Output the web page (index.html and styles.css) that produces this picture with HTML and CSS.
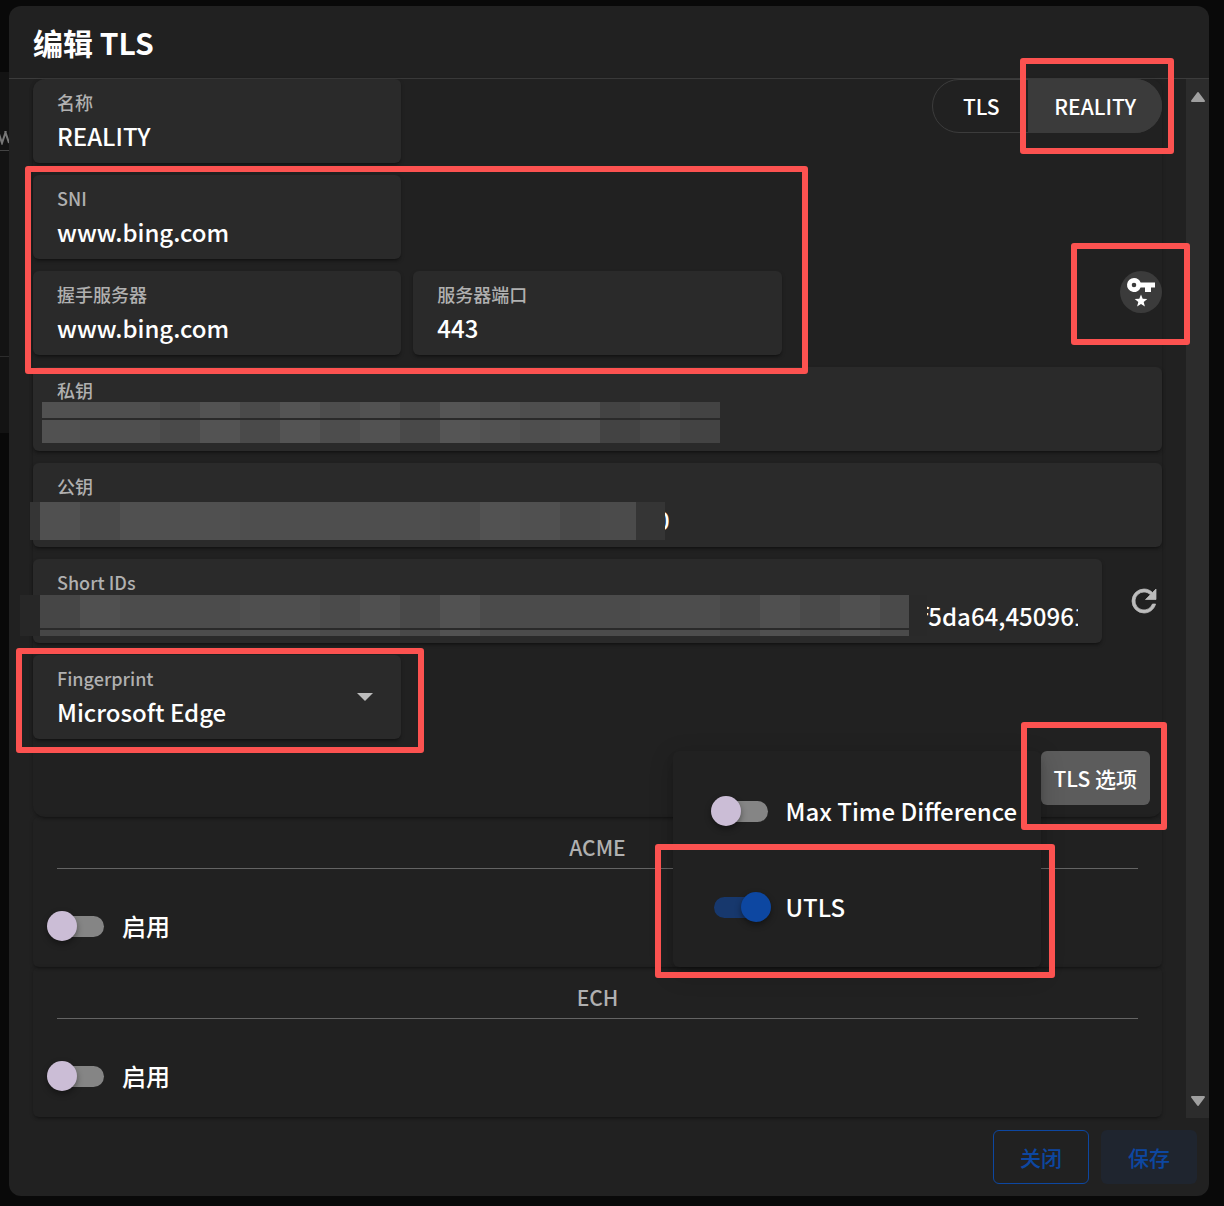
FILE: index.html
```html
<!DOCTYPE html>
<html lang="zh-CN">
<head>
<meta charset="utf-8">
<meta name="viewport" content="width=device-width, initial-scale=1">
<title>编辑 TLS</title>
<link rel="stylesheet" href="styles.css">
</head>
<body>
<div class="backdrop" aria-hidden="true">
  <div class="backdrop-field">
    <svg viewBox="0 0 9 14" width="9" height="14" fill="none" stroke="#777" stroke-width="2"><path d="M-2 0L2 12 6 0M5 0l4 12"/></svg>
  </div>
</div>
<main class="dialog" role="dialog" aria-labelledby="dialog-title">
  <h1 class="dialog-title" id="dialog-title">编辑 TLS</h1>
  <div class="dialog-body">
    <div class="content">
      <section class="card card-main">
        <div class="form">
          <div class="field field-first">
            <label for="name">名称</label>
            <input id="name" type="text" value="REALITY">
          </div>
          <div class="toggle">
            <button type="button" class="toggle-item">TLS</button>
            <button type="button" class="toggle-item active" aria-pressed="true">REALITY<span class="mark mark-reality"></span></button>
          </div>
          <div class="field row-sni">
            <label for="sni">SNI</label>
            <input id="sni" type="text" value="www.bing.com">
          </div>
          <div class="field row-server">
            <label for="server">握手服务器</label>
            <input id="server" type="text" value="www.bing.com">
          </div>
          <div class="field row-port">
            <label for="port">服务器端口</label>
            <input id="port" type="text" inputmode="numeric" value="443">
          </div>
          <button type="button" class="key-button" aria-label="生成密钥">
            <svg viewBox="0 0 42 42" width="42" height="42" fill="currentColor"><path fill-rule="evenodd" d="M14 7a7 7 0 0 1 6.600 4.600H35v4.800h-4V21h-6v-4.600h-4.400A7 7 0 1 1 14 7zm0 4.700a2.300 2.300 0 1 0 0 4.600a2.300 2.300 0 0 0 0-4.600z"/><path d="M21 23.500l1.700 4.300 4.600.3-3.600 2.900 1.200 4.500-3.900-2.500-3.900 2.500 1.200-4.500-3.600-2.900 4.600-.3z"/></svg>
            <span class="mark mark-key"></span>
          </button>
          <span class="group-mark"></span>
          <div class="field wide">
            <label for="private-key">私钥</label>
            <input id="private-key" type="text">
            <span class="mosaic mosaic-private"></span>
          </div>
          <div class="field wide">
            <label for="public-key">公钥</label>
            <input id="public-key" type="text" value="0">
            <span class="mosaic mosaic-public"></span>
          </div>
          <div class="wide short-ids">
            <div class="field">
              <label for="short-ids">Short IDs</label>
              <input id="short-ids" type="text" value="f5da64,450961">
              <span class="mosaic mosaic-ids"></span>
            </div>
            <button type="button" class="refresh" aria-label="刷新">
              <svg viewBox="0 0 24 24" width="36" height="36" fill="currentColor" stroke="currentColor" stroke-width=".5"><path d="M17.650 6.350C16.200 4.900 14.210 4 12 4a8 8 0 0 0 0 16c3.730 0 6.840-2.550 7.730-6h-2.080A6 6 0 1 1 12 6c1.660 0 3.140.69 4.220 1.780L13 11h7V4z"/></svg>
            </button>
          </div>
          <div class="field">
            <label for="fingerprint">Fingerprint</label>
            <select id="fingerprint"><option>Microsoft Edge</option></select>
            <svg class="caret" viewBox="0 0 16 8" width="16" height="8" fill="currentColor"><path d="M0 0h16L8 8z"/></svg>
            <span class="mark mark-fingerprint"></span>
          </div>
        </div>
        <div class="card-actions">
          <div class="options">
            <button type="button" class="options-button" aria-expanded="true">TLS 选项</button>
            <div class="menu">
              <label class="switch menu-item"><input type="checkbox"><span>Max Time Difference</span></label>
              <label class="switch menu-item"><input type="checkbox" checked><span>UTLS</span><i class="mark mark-utls"></i></label>
            </div>
            <span class="mark mark-options"></span>
          </div>
        </div>
      </section>
      <section class="card">
        <h2 class="card-title">ACME</h2>
        <hr>
        <label class="switch card-switch"><input type="checkbox"><span>启用</span></label>
      </section>
      <section class="card">
        <h2 class="card-title">ECH</h2>
        <hr>
        <label class="switch card-switch"><input type="checkbox"><span>启用</span></label>
      </section>
    </div>
    <div class="scrollbar" aria-hidden="true">
      <svg viewBox="0 0 16 12" width="16" height="12"><path d="M8 2l6 8H2z"/></svg>
      <svg viewBox="0 0 16 12" width="16" height="12"><path d="M8 10l6-8H2z"/></svg>
    </div>
  </div>
  <footer class="dialog-actions">
    <button type="button" class="button outlined">关闭</button>
    <button type="button" class="button tonal">保存</button>
  </footer>
</main>
</body>
</html>
```
FILE: styles.css
```css
:root {
  --surface: #212121;
  --field: #2a2a2a;
  --primary: #0d47a1;
  --mark: #fc5250;
  --muted: #b0b0b0;
}

* {
  box-sizing: border-box;
}

body {
  display: flex;
  min-height: 100vh;
  margin: 0;
  padding: 6px 15px 10px 9px;
  background: #090909;
  color: #fff;
  font-family: "Noto Sans CJK SC", "Noto Sans", sans-serif;
  font-size: 24px;
  font-weight: 500;
  line-height: 36px;
}

button,
input,
select {
  margin: 0;
  padding: 0;
  border: 0;
  background: none;
  color: inherit;
  font: inherit;
}

button {
  cursor: pointer;
  font-size: 21px;
}

/* Page behind the dialog */
.backdrop {
  position: absolute;
  z-index: -1;
  top: 72px;
  left: 0;
  width: 50%;
  height: 361px;
  overflow: hidden;
  background: #131313;
}

.backdrop-field {
  height: 79px;
  padding-top: 59px;
  border-bottom: 1px solid #444;
  line-height: 0;
}

.backdrop::after {
  content: "";
  display: block;
  height: 205px;
  border-bottom: 1px solid #2c2c2c;
}

.dialog {
  display: flex;
  flex: 1;
  flex-direction: column;
  min-width: 0;
  border-radius: 12px;
  background: var(--surface);
}

.dialog-title {
  margin: 0;
  padding: 18px 24px;
  font-size: 30px;
  font-weight: 700;
}

.dialog-body {
  display: flex;
  flex: 1;
  border-top: 1px solid #3c3c3c;
}

.content {
  flex: 1;
  min-width: 0;
  padding: 0 24px;
}

.scrollbar {
  display: flex;
  flex-direction: column;
  align-items: center;
  justify-content: space-between;
  width: 23px;
  padding: 12px 0 11px;
  background: #2c2c2c;
}

.scrollbar path {
  fill: #9f9f9f;
  stroke: #9f9f9f;
  stroke-width: 2;
  stroke-linejoin: round;
}

.card {
  border-radius: 6px;
  box-shadow: 0 3px 3px -2px rgba(0, 0, 0, .35), 0 1px 4px rgba(0, 0, 0, .18);
}

.card-main {
  border-radius: 12px;
}

.form {
  display: grid;
  grid-template-columns: repeat(3, minmax(0, 1fr));
  gap: 12px;
}

.field {
  position: relative;
  display: flex;
  flex-direction: column;
  gap: 4px;
  height: 84px;
  padding: 11px 24px 9px;
  border-radius: 6px;
  background: var(--field);
  box-shadow: 0 3px 3px -2px rgba(0, 0, 0, .4), 0 2px 4px rgba(0, 0, 0, .2);
}

.field-first {
  border-top-left-radius: 12px;
}

.field label {
  color: var(--muted);
  font-size: 18px;
  line-height: 24px;
}

.field input,
.field select {
  width: 100%;
  height: 36px;
  outline: 0;
  appearance: none;
}

.row-sni {
  grid-row: 2;
  grid-column: 1;
}

.row-server {
  grid-row: 3;
  grid-column: 1;
}

.row-port {
  grid-row: 3;
  grid-column: 2;
}

.wide {
  grid-column: 1 / -1;
}

.short-ids {
  display: flex;
  align-items: center;
  gap: 24px;
}

.short-ids .field {
  flex: 1;
}

#public-key {
  padding-left: 599px;
}

#short-ids {
  padding-left: 863px;
}

.toggle {
  display: flex;
  grid-column: 3;
  justify-self: end;
  height: 54px;
  border: 1px solid #3c3c3c;
  border-radius: 27px;
}

.toggle-item {
  position: relative;
  min-width: 96px;
  padding: 0 26px;
}

.toggle-item.active {
  margin: -1px;
  border-radius: 0 27px 27px 0;
  background: #3b3b3b;
}

.key-button {
  position: relative;
  grid-row: 3;
  grid-column: 3;
  justify-self: end;
  width: 42px;
  height: 42px;
  border-radius: 50%;
  background: #3b3b3b;
}

.key-button svg,
.refresh svg {
  display: block;
}

.refresh {
  color: #bcbcbc;
}

.caret {
  position: absolute;
  top: 38px;
  right: 28px;
  color: #bcbcbc;
  pointer-events: none;
}

.card-actions {
  display: flex;
  justify-content: flex-end;
  padding: 12px;
}

.options {
  position: relative;
}

.options-button {
  height: 54px;
  padding: 0 13px;
  border-radius: 6px;
  background: #5c5c5c;
}

.menu {
  position: absolute;
  z-index: 2;
  top: 0;
  right: 100%;
  width: 368px;
  padding: 12px 0;
  border-radius: 6px;
  background: var(--surface);
  box-shadow: 0 5px 8px -3px rgba(0, 0, 0, .3), 0 6px 24px rgba(0, 0, 0, .2);
}

.switch {
  position: relative;
  display: flex;
  align-items: center;
  gap: 18px;
}

.menu-item {
  height: 96px;
  padding-left: 41px;
  white-space: nowrap;
}

.card-switch {
  height: 82px;
  padding-left: 17px;
}

.switch input {
  position: relative;
  width: 54px;
  height: 21px;
  border-radius: 11px;
  background: #858585;
  appearance: none;
}

.switch input::before {
  content: "";
  position: absolute;
  top: -5px;
  left: -3px;
  width: 30px;
  height: 30px;
  border-radius: 50%;
  background: #cbbdd6;
  box-shadow: 0 3px 6px rgba(0, 0, 0, .4);
}

.switch input:checked {
  background: #17386d;
}

.switch input:checked::before {
  left: 27px;
  background: var(--primary);
}

.card-title {
  margin: 0;
  padding-top: 12px;
  color: var(--muted);
  font-size: 21px;
  font-weight: 500;
  text-align: center;
}

hr {
  height: 1px;
  margin: 3px 24px 16px;
  border: 0;
  background: #646464;
}

.dialog-actions {
  display: flex;
  justify-content: flex-end;
  gap: 12px;
  padding: 12px;
}

.button {
  width: 96px;
  height: 54px;
  border-radius: 6px;
  color: var(--primary);
}

.outlined {
  border: 1px solid var(--primary);
}

.tonal {
  background: #1f252f;
}

/* Pixelated strips over secret values */
.mosaic {
  position: absolute;
}

.mosaic-private {
  top: 35px;
  left: 9px;
  width: 678px;
  height: 41px;
  background:
    linear-gradient(#2a2a2a, #2a2a2a) 0 16px / 100% 2px no-repeat,
    linear-gradient(90deg, #515151 38px, #4f4f4f 38px 118px, #4a4a4a 118px 158px, #535353 158px 198px, #4a4a4a 198px 238px, #545454 238px 278px, #4d4d4d 278px 318px, #525252 318px 358px, #494949 358px 398px, #555 398px 438px, #525252 438px 478px, #4e4e4e 478px 518px, #505050 518px 558px, #434343 558px 598px, #484848 598px 638px, #434343 638px);
}

.mosaic-public {
  top: 39px;
  left: -3px;
  width: 635px;
  height: 38px;
  background: linear-gradient(90deg, #353535 10px, #505050 10px 50px, #494949 50px 90px, #505050 90px 210px, #4e4e4e 210px 410px, #4c4c4c 410px 450px, #525252 450px 490px, #505050 490px 530px, #494949 530px 570px, #4b4b4b 570px 606px, #353535 606px);
}

.mosaic-ids {
  top: 36px;
  left: -13px;
  width: 907px;
  height: 41px;
  background:
    linear-gradient(#2a2a2a, #2a2a2a) 20px 33px / 869px 2px no-repeat,
    linear-gradient(90deg, #272727 20px, #464646 20px 60px, #505050 60px 100px, #4c4c4c 100px 220px, #4f4f4f 220px 300px, #4b4b4b 300px 340px, #505050 340px 380px, #494949 380px 420px, #525252 420px 460px, #4b4b4b 460px 620px, #4d4d4d 620px 700px, #484848 700px 740px, #505050 740px 780px, #4a4a4a 780px 820px, #505050 820px 860px, #4a4a4a 860px 889px, #292929 889px);
}

/* Red callout frames */
.mark,
.group-mark {
  z-index: 3;
  border: 6px solid var(--mark);
  border-radius: 3px;
  pointer-events: none;
}

.mark {
  position: absolute;
}

.group-mark {
  grid-area: 2 / 1 / 4 / 3;
  margin: -9px -26px -19px -8px;
}

.mark-reality {
  inset: -21px -12px -21px -8px;
}

.mark-key {
  inset: -28px -28px -32px -49px;
}

.mark-fingerprint {
  inset: -7px -23px -14px -17px;
}

.mark-options {
  inset: -29px -17px -25px -20px;
}

.mark-utls {
  inset: -15px -14px -23px -18px;
}
```
